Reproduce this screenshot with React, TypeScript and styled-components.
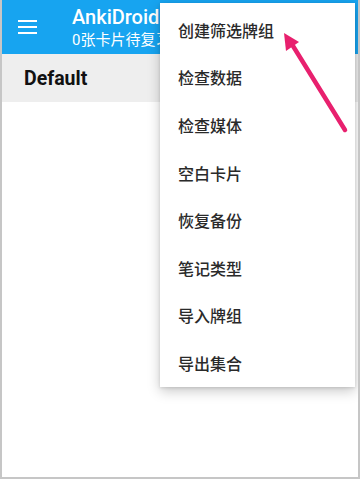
import { ReactElement } from 'react';
import styled, { createGlobalStyle } from 'styled-components';

const GlobalStyle = createGlobalStyle`
  html, body {
    margin: 0;
    padding: 0;
    background: #ffffff;
  }
`;

const Frame = styled.div`
  position: relative;
  width: 360px;
  height: 479px;
  box-sizing: border-box;
  border: 2px solid #c6c6c6;
  border-top: none;
  overflow: hidden;
  font-family: Roboto, 'Noto Sans CJK SC', sans-serif;
  background: #ffffff;
`;

const AppBar = styled.div`
  display: flex;
  align-items: center;
  height: 54px;
  margin: 0 -2px;
  background: #17a4f0;
  color: #ffffff;
`;

const MenuButton = styled.div`
  display: flex;
  flex-direction: column;
  gap: 4px;
  width: 19px;
  margin: 0 35px 0 18px;

  span {
    height: 2px;
    background: #ffffff;
  }
`;

const TitleBlock = styled.div`
  display: flex;
  flex-direction: column;
  white-space: nowrap;
`;

const Title = styled.div`
  font-size: 20px;
  font-weight: 500;
  line-height: 24px;
`;

const SubTitle = styled.div`
  font-family: Roboto, 'Noto Sans CJK SC', sans-serif;
  font-size: 15px;
  line-height: 20px;
  margin-top: 1px;
`;

const DeckRow = styled.div`
  display: flex;
  align-items: center;
  height: 48px;
  padding-left: 22px;
  background: #eeeeee;
  font-size: 19.5px;
  font-weight: 700;
  color: #111111;
`;

const Menu = styled.div`
  position: absolute;
  top: 3px;
  left: 158px;
  width: 195px;
  padding-top: 3px;
  background: #ffffff;
  box-shadow: 0 4px 12px rgba(0, 0, 0, 0.22), 0 1px 3px rgba(0, 0, 0, 0.12);
`;

const MenuItem = styled.div`
  display: flex;
  align-items: center;
  height: 47.6px;
  padding-left: 18px;
  font-family: 'Noto Sans CJK SC', sans-serif;
  font-size: 16px;
  font-weight: 500;
  color: #2a2a2a;
`;

const Arrow = styled.svg`
  position: absolute;
  top: 0;
  left: 0;
  pointer-events: none;
`;

const items = [
  '创建筛选牌组',
  '检查数据',
  '检查媒体',
  '空白卡片',
  '恢复备份',
  '笔记类型',
  '导入牌组',
  '导出集合',
];

const App = (): ReactElement => {
  return (
    <>
      <GlobalStyle />
      <Frame>
        <AppBar>
          <MenuButton>
            <span />
            <span />
            <span />
          </MenuButton>
          <TitleBlock>
            <Title>AnkiDroid</Title>
            <SubTitle>0张卡片待复习</SubTitle>
          </TitleBlock>
        </AppBar>
        <DeckRow>Default</DeckRow>
        <Menu>
          {items.map((item) => (
            <MenuItem key={item}>{item}</MenuItem>
          ))}
        </Menu>
        <Arrow width="360" height="479" viewBox="0 0 360 479">
          <line
            x1="343"
            y1="130"
            x2="291"
            y2="46"
            stroke="#e8206e"
            strokeWidth="4.5"
            strokeLinecap="round"
          />
          <polygon points="282,33 297,42 284,51" fill="#e8206e" />
        </Arrow>
      </Frame>
    </>
  );
};

export default App;
